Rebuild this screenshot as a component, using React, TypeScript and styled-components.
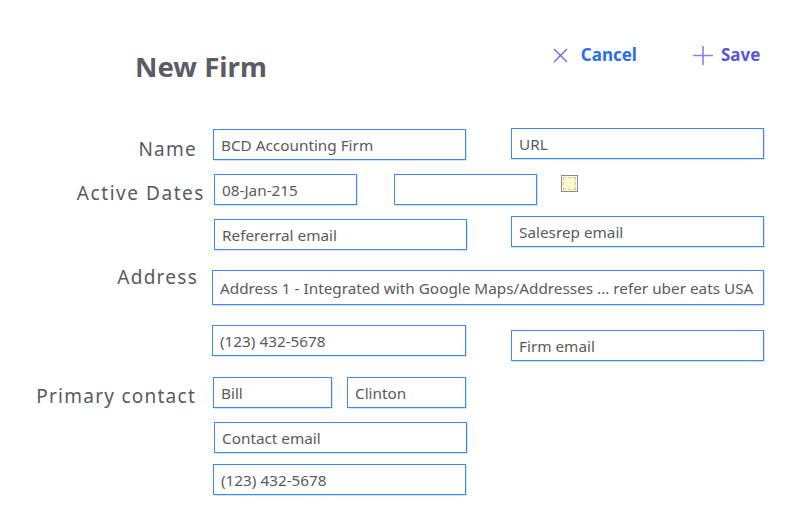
import React from "react";
import styled, { createGlobalStyle } from "styled-components";

const GlobalStyle = createGlobalStyle`
  html, body { margin: 0; padding: 0; background: #ffffff; }
  body { font-family: "Noto Sans", "Open Sans", sans-serif; }
  * { box-sizing: border-box; }
`;

const Page = styled.div`
  width: 801px;
  height: 517px;
  position: relative;
  overflow: hidden;
`;

const Header = styled.header`
  display: flex;
  align-items: flex-start;
  height: 128px;
`;

const Title = styled.h1`
  margin: 50px 0 0 135px;
  font-size: 27.6px;
  line-height: 32px;
  font-weight: 700;
  color: #5a5c64;
`;

const Actions = styled.div`
  display: flex;
  align-items: center;
  margin: 45px 0 0 285px;
`;

const ActionButton = styled.button<{ $color: string; $gap: number; $ml: number }>`
  display: flex;
  align-items: center;
  gap: ${(p) => p.$gap}px;
  margin-left: ${(p) => p.$ml}px;
  padding: 0;
  border: none;
  background: none;
  font-family: "Noto Sans", sans-serif;
  font-size: 17px;
  line-height: 20px;
  font-weight: 700;
  color: ${(p) => p.$color};
  cursor: pointer;
`;

const Form = styled.div`
  display: flex;
  flex-direction: column;
`;

const Row = styled.div<{ $mt: number; $h: number }>`
  display: grid;
  grid-template-columns: 212px 1fr;
  margin-top: ${(p) => p.$mt}px;
  height: ${(p) => p.$h}px;
`;

const Label = styled.label<{ $pt: number; $pr: number; $ls?: number }>`
  display: block;
  margin-top: ${(p) => p.$pt}px;
  padding-right: ${(p) => p.$pr}px;
  text-align: right;
  font-size: 19px;
  line-height: 22px;
  letter-spacing: ${(p) => p.$ls ?? 1.25}px;
  color: #5a5a5e;
  white-space: nowrap;
`;

const Fields = styled.div`
  display: flex;
  align-items: flex-start;
`;

const Input = styled.input<{ $w: number; $h?: number; $ml?: number; $mt?: number }>`
  width: ${(p) => p.$w}px;
  height: ${(p) => p.$h ?? 31}px;
  margin: ${(p) => p.$mt ?? 0}px 0 0 ${(p) => p.$ml ?? 0}px;
  padding: 0 0 0 7px;
  border: 1px solid #3a88f4;
  box-shadow: 1px 1px 0 rgba(110, 170, 250, 0.3);
  border-radius: 0;
  outline: none;
  font-family: "Noto Sans", sans-serif;
  font-size: 15.3px;
  color: #5a5a5a;
  background: #fff;
  &::placeholder { color: #5a5a5a; opacity: 1; }
`;

const CheckBox = styled.span<{ $ml: number; $mt: number }>`
  display: inline-flex;
  align-items: center;
  justify-content: center;
  width: 17px;
  height: 17px;
  margin: ${(p) => p.$mt}px 0 0 ${(p) => p.$ml}px;
  border: 1.5px solid #8a8a8a;
  background: #fff;
  &::after {
    content: "";
    width: 11px;
    height: 11px;
    border: 1px dashed #f0c36a;
    background: #fff9d2;
  }
`;

function XIcon() {
  return (
    <svg width="15" height="15" viewBox="0 0 15 15">
      <path d="M1 1L14 14M14 1L1 14" stroke="#6868ee" strokeWidth="1.4" fill="none" />
    </svg>
  );
}

function PlusIcon() {
  return (
    <svg width="20" height="19" viewBox="0 0 20 19">
      <path d="M10 0V19M0 9.5H20" stroke="#8a7ff2" strokeWidth="1.6" fill="none" />
    </svg>
  );
}

export default function App() {
  return (
    <Page>
      <GlobalStyle />
      <Header>
        <Title>New Firm</Title>
        <Actions>
          <ActionButton $color="#2c6de8" $gap={13} $ml={1}>
            <XIcon />
            Cancel
          </ActionButton>
          <ActionButton $color="#5a56da" $gap={8} $ml={56}>
            <PlusIcon />
            Save
          </ActionButton>
        </Actions>
      </Header>
      <Form>
        <Row $mt={0} $h={32}>
          <Label $pt={10} $pr={15}>Name</Label>
          <Fields>
            <Input $w={253} $ml={1} $mt={1} defaultValue="BCD Accounting Firm" />
            <Input $w={253} $ml={45} placeholder="URL" />
          </Fields>
        </Row>
        <Row $mt={14} $h={31}>
          <Label $pt={8} $pr={7} $ls={1.55}>Active Dates</Label>
          <Fields>
            <Input $w={143} $ml={2} defaultValue="08-Jan-215" />
            <Input $w={143} $ml={37} />
            <CheckBox $ml={24} $mt={1} />
          </Fields>
        </Row>
        <Row $mt={11} $h={34}>
          <span />
          <Fields>
            <Input $w={253} $ml={2} $mt={3} placeholder="Refererral email" />
            <Input $w={253} $ml={44} placeholder="Salesrep email" />
          </Fields>
        </Row>
        <Row $mt={20} $h={34}>
          <Label $pt={-4} $pr={14}>Address</Label>
          <Fields>
            <Input $w={552} $h={35} defaultValue="Address 1 - Integrated with Google Maps/Addresses ... refer uber eats USA" />
          </Fields>
        </Row>
        <Row $mt={21} $h={36}>
          <span />
          <Fields>
            <Input $w={254} defaultValue="(123) 432-5678" />
            <Input $w={253} $ml={45} $mt={5} placeholder="Firm email" />
          </Fields>
        </Row>
        <Row $mt={16} $h={31}>
          <Label $pt={8} $pr={16}>Primary contact</Label>
          <Fields>
            <Input $w={119} $ml={1} defaultValue="Bill" />
            <Input $w={119} $ml={15} defaultValue="Clinton" />
          </Fields>
        </Row>
        <Row $mt={14} $h={31}>
          <span />
          <Fields>
            <Input $w={253} $ml={2} placeholder="Contact email" />
          </Fields>
        </Row>
        <Row $mt={11} $h={31}>
          <span />
          <Fields>
            <Input $w={253} $ml={1} defaultValue="(123) 432-5678" />
          </Fields>
        </Row>
      </Form>
    </Page>
  );
}
